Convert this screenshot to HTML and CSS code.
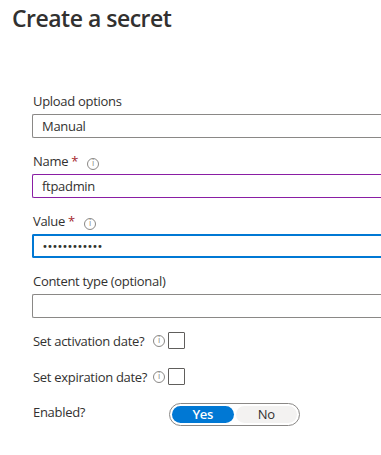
FILE: index.html
```html
<!DOCTYPE html>
<html lang="en">
<head>
    <meta charset="UTF-8">
    <title>Create a secret</title>
    <link rel="stylesheet" href="styles.css">
</head>
<body>
    <h1 class="title">Create a secret</h1>

    <div class="form">
        <div class="field first">
            <label class="label">Upload options</label>
            <div class="input">Manual</div>
        </div>

        <div class="field">
            <label class="label">Name <span class="req">*</span> <span class="info">i</span></label>
            <div class="input input_name">ftpadmin</div>
        </div>

        <div class="field">
            <label class="label">Value <span class="req">*</span> <span class="info">i</span></label>
            <div class="input input_value"><span class="dots">&bull;&bull;&bull;&bull;&bull;&bull;&bull;&bull;&bull;&bull;&bull;&bull;</span></div>
        </div>

        <div class="field">
            <label class="label">Content type (optional)</label>
            <div class="input"></div>
        </div>

        <div class="row row_first">
            <span class="row_label">Set activation date?</span>
            <span class="info info_row">i</span>
            <span class="checkbox"></span>
        </div>

        <div class="row">
            <span class="row_label">Set expiration date?</span>
            <span class="info info_row">i</span>
            <span class="checkbox"></span>
        </div>

        <div class="row row_toggle">
            <span class="row_label toggle_label">Enabled?</span>
            <div class="toggle">
                <span class="toggle_on">Yes</span>
                <span class="toggle_off">No</span>
            </div>
        </div>
    </div>
</body>
</html>
```

FILE: styles.css
```css
body{
    margin: 0;
    overflow: hidden;
    background-color: #ffffff;
    color: #323130;
    font-family: "Open Sans", "Noto Sans", sans-serif;
    letter-spacing: -0.3px;
}

.title{
    margin: 0;
    padding: 2px 0 0 12px;
    font-size: 23px;
    font-weight: 600;
    line-height: 32px;
    letter-spacing: -0.5px;
    color: #323130;
}

/* the inputs run on past the right edge of the panel */
.form{
    padding-left: 32px;
}

.field{
    margin-top: 13px;
}

.field.first{
    margin-top: 57px;
}

.label{
    display: block;
    font-size: 13px;
    line-height: 20px;
    padding-left: 1px;
    margin-bottom: 3px;
}

.req{
    color: #a4262c;
}

.info{
    display: inline-block;
    width: 10px;
    height: 10px;
    border: 1px solid #8a8886;
    border-radius: 50%;
    color: #8a8886;
    font-size: 8px;
    line-height: 10px;
    text-align: center;
    font-family: "DejaVu Sans", sans-serif;
    letter-spacing: 0;
    vertical-align: 0;
    margin-left: 6px;
}

.input{
    box-sizing: border-box;
    height: 24px;
    border: 1px solid #8a8886;
    border-right-width: 0;
    border-radius: 2px 0 0 2px;
    padding: 0 9px;
    font-size: 13px;
    line-height: 22px;
}

.input_name{
    border-color: #8a1ea4;
}

.input_value{
    border: 2px solid #0078d4;
    border-right-width: 0;
    padding-left: 8px;
    line-height: 20px;
}

.dots{
    font-size: 10px;
    letter-spacing: -0.9px;
    font-family: "DejaVu Sans", sans-serif;
    position: relative;
    top: -1px;
}

.row{
    display: flex;
    align-items: center;
    height: 17px;
    margin-top: 19px;
}

.row_first{
    margin-top: 14px;
}

.row_label{
    flex-shrink: 0;
    white-space: nowrap;
    font-size: 13px;
    padding-left: 1px;
    width: 120px;
}

.info_row{
    margin-left: 0;
    margin-right: 3px;
}

.checkbox{
    box-sizing: border-box;
    width: 17px;
    height: 17px;
    border: 1px solid #605e5c;
    border-radius: 1px;
}

.row_toggle{
    margin-top: 18px;
    height: 23px;
    align-items: flex-start;
}

.toggle_label{
    width: 136px;
    line-height: 18px;
}

.toggle{
    box-sizing: border-box;
    display: flex;
    width: 131px;
    height: 23px;
    padding: 2px;
    border: 1px solid #8a8886;
    border-radius: 12px;
    font-size: 13px;
}

.toggle_on, .toggle_off{
    flex: 1;
    text-align: center;
    line-height: 17px;
    border-radius: 9px;
}

.toggle_on{
    background-color: #0078d4;
    color: #ffffff;
    font-weight: 600;
    margin-right: 2px;
}

.toggle_off{
    background-color: #f3f2f1;
    color: #323130;
}
```
